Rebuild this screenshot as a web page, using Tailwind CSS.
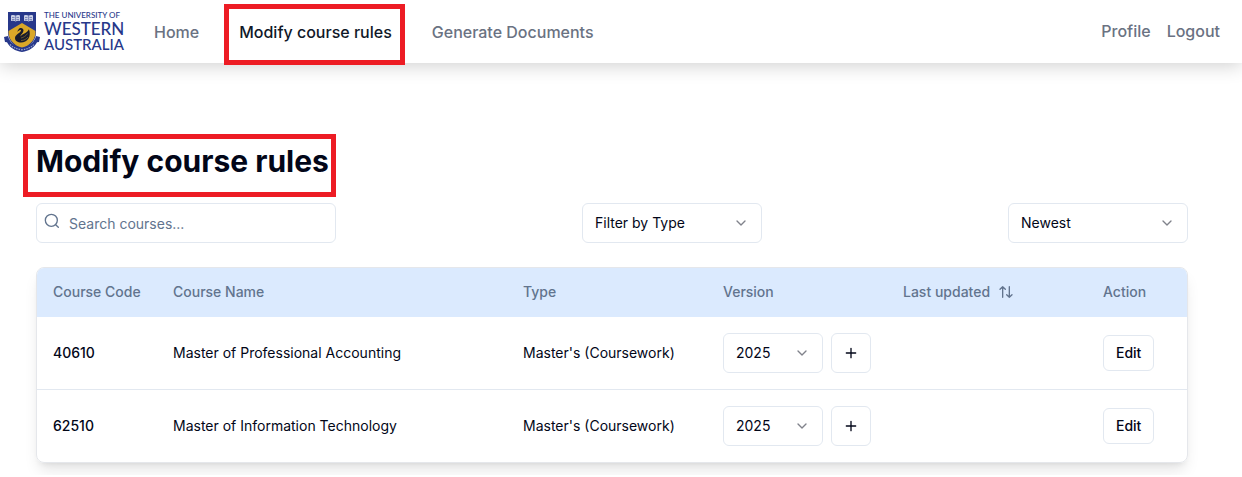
<!DOCTYPE html>
<html lang="en">
<head>
<meta charset="utf-8">
<meta name="viewport" content="width=device-width, initial-scale=1">
<title>Modify course rules</title>
<script src="https://cdn.jsdelivr.net/npm/@tailwindcss/browser@4"></script>
</head>
<body class="bg-white font-['Inter',sans-serif] text-sm text-slate-950">
<svg class="hidden" aria-hidden="true">
  <symbol id="chevron" viewBox="0 0 24 24" fill="none" stroke="currentColor" stroke-width="2" stroke-linecap="round" stroke-linejoin="round"><path d="m6 9 6 6 6-6"/></symbol>
  <symbol id="plus" viewBox="0 0 24 24" fill="none" stroke="currentColor" stroke-width="2" stroke-linecap="round" stroke-linejoin="round"><path d="M5 12h14M12 5v14"/></symbol>
</svg>

<header class="flex h-[63px] items-center justify-between bg-white pr-[22px] pl-1 shadow-[0_2px_18px_rgba(0,0,0,0.2)]">
  <div class="flex items-center">
    <a href="#" aria-label="The University of Western Australia" class="block">
      <svg class="h-[44px] w-[124px] overflow-visible" viewBox="0 0 124 44">
        <path d="M4 2h28v20c0 9-6 14-14 18C10 36 4 31 4 22z" fill="#27388a"/>
        <path d="M18 13 31.500 21c.3 8-4.500 13.500-13.500 17.500C9 34.500 4.200 29 4.500 21z" fill="#d9a728"/>
        <g fill="#c9cfe5">
          <path d="M7 5.500c2-.8 3.300-.6 4.600.3 1.300-.9 2.600-1.100 4.400-.3v5.500c-1.700-.6-3.100-.4-4.400.4-1.300-.8-2.600-1-4.600-.4z"/>
          <path d="M20 5.500c2-.8 3.300-.6 4.600.3 1.300-.9 2.600-1.100 4.400-.3v5.500c-1.700-.6-3.100-.4-4.400.4-1.300-.8-2.600-1-4.600-.4z"/>
        </g>
        <path d="M8 7.500h2.500M12.500 7.500H15M8 9.500h2.500M12.500 9.500H15M21 7.500h2.500M25.500 7.500H28M21 9.500h2.500M25.500 9.500H28M11.600 6v5M24.600 6v5" stroke="#5b69a8" stroke-width=".7"/>
        <path d="M14.500 19.500c1.500-2.500 5-1.800 5 1 0 2.500-3 4-3.200 6 1-1.500 3.200-2.500 5-3.500 1.600-.9 2.600-2 3.600-3.800 1.300 3 1.200 6.800-.4 9.300-1.700 2.700-4.500 4-7.500 4-3.500 0-6-1.600-6-4.500 0-3.300 5.800-5.300 6-7.500.1-1-1-1.200-1.500-.3l-2.500 1.600z" fill="#171b2c"/>
        <path d="M17 28c2.500-.5 5-2 6.500-4.500M17 30.500c3 0 5.500-1.500 7-3.500" stroke="#8d732e" stroke-width=".7" fill="none"/>
        <path d="M0 27 4 26c1.500 6 6 10 14 11.500C26 36 30.500 32 32 26l4 1-1 5-2 .3C30 38 25 41 18 42 11 41 6 38 3 32.300L1 32z" fill="#27388a"/>
        <path d="M6 34.500c3 3 6.500 4.500 12 5.300 5.500-.8 9-2.300 12-5.300" stroke="#9aa5cf" stroke-width="1.200" stroke-dasharray="1.500 1" fill="none"/>
        <g fill="#27388a" font-family="Lato, sans-serif" font-weight="500">
          <text x="40" y="8" font-size="8">THE UNIVERSITY OF</text>
          <text x="40" y="25" font-size="17">WESTERN</text>
          <text x="40" y="40" font-size="15">AUSTRALIA</text>
        </g>
      </svg>
    </a>
    <nav class="flex items-center text-base font-medium text-gray-500">
      <a href="#" class="ml-[26px]">Home</a>
      <a href="#" aria-current="page" class="relative ml-10 text-gray-900">Modify course rules
        <span class="pointer-events-none absolute -top-[16px] -right-[13px] -left-[15px] h-[61px] border-[5px] border-[#ed1c24]"></span>
      </a>
      <a href="#" class="ml-10">Generate Documents</a>
    </nav>
  </div>
  <nav class="flex gap-4 pb-0.5 text-base font-medium text-gray-500">
    <a href="#">Profile</a>
    <a href="#">Logout</a>
  </nav>
</header>

<main class="pt-20 pr-[54px] pb-3 pl-9">
  <h1 class="relative w-fit text-3xl font-bold">Modify course rules
    <span class="pointer-events-none absolute -top-[9px] -right-[7px] -left-[13px] h-[63px] border-[5px] border-[#ed1c24]"></span>
  </h1>

  <div class="mt-6 flex items-center justify-between">
    <div class="relative w-[300px]">
      <svg class="absolute top-[10px] left-2 size-4 text-slate-500" viewBox="0 0 24 24" fill="none" stroke="currentColor" stroke-width="2" stroke-linecap="round" aria-hidden="true"><circle cx="11" cy="11" r="9"/><path d="m21.500 21.500-4-4"/></svg>
      <input type="search" aria-label="Search courses" placeholder="Search courses..." class="block h-10 w-full rounded-md border border-slate-200 pr-3 pl-8 placeholder:text-slate-500">
    </div>
    <div class="relative w-[180px]">
      <select aria-label="Filter by Type" class="block h-10 w-full appearance-none rounded-md border border-slate-200 bg-white px-3"><option>Filter by Type</option></select>
      <svg class="pointer-events-none absolute top-3 right-[13px] size-4 text-slate-950/50"><use href="#chevron"/></svg>
    </div>
    <div class="relative w-[180px]">
      <select aria-label="Sort order" class="block h-10 w-full appearance-none rounded-md border border-slate-200 bg-white px-3"><option>Newest</option></select>
      <svg class="pointer-events-none absolute top-3 right-[13px] size-4 text-slate-950/50"><use href="#chevron"/></svg>
    </div>
  </div>

  <div class="mt-6 overflow-hidden rounded-lg border border-gray-200 shadow-lg">
    <table class="w-full table-fixed border-separate border-spacing-0 text-left">
      <colgroup><col class="w-[120px]"><col><col class="w-[200px]"><col class="w-[180px]"><col class="w-[200px]"><col class="w-[100px]"></colgroup>
      <thead class="bg-blue-100 text-slate-500">
        <tr class="h-[49px]">
          <th class="px-4 pb-0.5 font-medium">Course Code</th>
          <th class="px-4 pb-0.5 font-medium">Course Name</th>
          <th class="px-4 pb-0.5 font-medium">Type</th>
          <th class="px-4 pb-0.5 font-medium">Version</th>
          <th class="px-4 pb-0.5 font-medium">
            <button type="button" class="flex items-center gap-2">Last updated
              <svg class="size-4" viewBox="0 0 24 24" fill="none" stroke="currentColor" stroke-width="2" stroke-linecap="round" stroke-linejoin="round" aria-hidden="true"><path d="M7 20V4M3 8l4-4 4 4M17 4v16M13 16l4 4 4-4"/></svg>
            </button>
          </th>
          <th class="px-4 pb-0.5 font-medium">Action</th>
        </tr>
      </thead>
      <tbody>
        <tr class="h-[73px] *:border-b *:border-slate-200">
          <td class="px-4 font-medium">40610</td>
          <td class="px-4">Master of Professional Accounting</td>
          <td class="px-4">Master's (Coursework)</td>
          <td class="px-4">
            <div class="flex gap-2">
              <div class="relative w-[100px] shrink-0">
                <select aria-label="Version of course 40610" class="block h-10 w-full appearance-none rounded-md border border-slate-200 bg-white px-3"><option>2025</option></select>
                <svg class="pointer-events-none absolute top-3 right-[13px] size-4 text-slate-950/50"><use href="#chevron"/></svg>
              </div>
              <button type="button" aria-label="Add version" class="flex size-10 shrink-0 items-center justify-center rounded-md border border-slate-200"><svg class="size-4"><use href="#plus"/></svg></button>
            </div>
          </td>
          <td class="px-4"></td>
          <td class="px-4"><button type="button" class="h-9 rounded-md border border-slate-200 px-3 font-medium">Edit</button></td>
        </tr>
        <tr class="h-[72px]">
          <td class="px-4 font-medium">62510</td>
          <td class="px-4">Master of Information Technology</td>
          <td class="px-4">Master's (Coursework)</td>
          <td class="px-4">
            <div class="flex gap-2">
              <div class="relative w-[100px] shrink-0">
                <select aria-label="Version of course 62510" class="block h-10 w-full appearance-none rounded-md border border-slate-200 bg-white px-3"><option>2025</option></select>
                <svg class="pointer-events-none absolute top-3 right-[13px] size-4 text-slate-950/50"><use href="#chevron"/></svg>
              </div>
              <button type="button" aria-label="Add version" class="flex size-10 shrink-0 items-center justify-center rounded-md border border-slate-200"><svg class="size-4"><use href="#plus"/></svg></button>
            </div>
          </td>
          <td class="px-4"></td>
          <td class="px-4"><button type="button" class="h-9 rounded-md border border-slate-200 px-3 font-medium">Edit</button></td>
        </tr>
      </tbody>
    </table>
  </div>
</main>
</body>
</html>
